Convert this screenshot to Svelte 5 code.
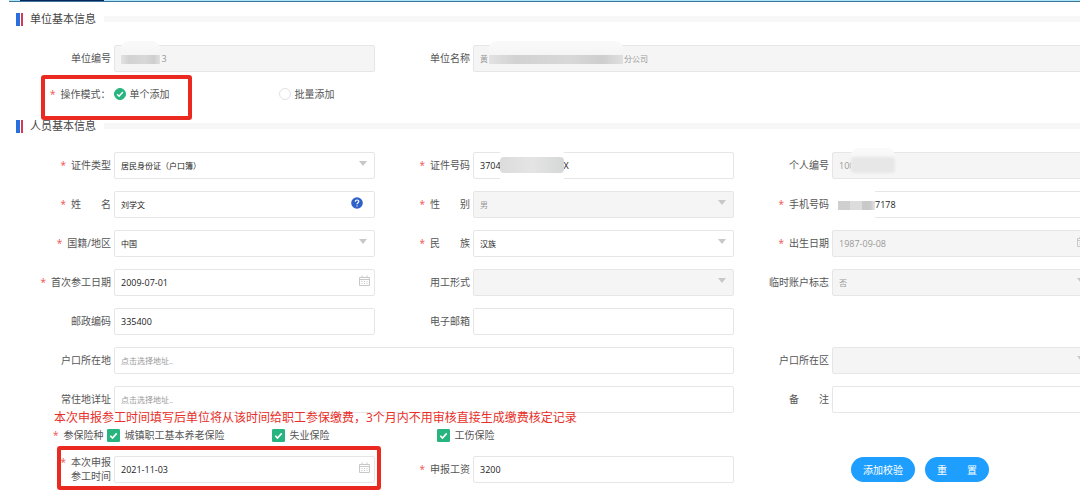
<script lang="ts">
	type Field = {
		id: string;
		label: string;
		kind?: 'text' | 'select' | 'date';
		value?: string;
		placeholder?: string;
		required?: boolean;
		disabled?: boolean;
		wide?: boolean;
		help?: boolean;
		numeric?: boolean;
		mask?: { left: number; width: number; tall?: boolean };
	};

	const EN = '\u2002';
	const EM = '\u3000';

	const unitFields: Field[] = [
		{
			id: 'unit-no',
			label: '单位编号',
			value: EN.repeat(9) + '3',
			disabled: true,
			numeric: true,
			mask: { left: 7, width: 39 }
		},
		{
			id: 'unit-name',
			label: '单位名称',
			value: '黄' + EM.repeat(17) + '分公司',
			disabled: true,
			wide: true,
			mask: { left: 16, width: 134 }
		}
	];

	const personFields: Field[] = [
		{ id: 'id-type', label: '证件类型', kind: 'select', value: '居民身份证（户口簿）', required: true },
		{
			id: 'id-no',
			label: '证件号码',
			value: '3704' + EM.repeat(7) + 'X',
			required: true,
			numeric: true,
			mask: { left: 27, width: 64, tall: true }
		},
		{
			id: 'person-no',
			label: '个人编号',
			value: '100',
			disabled: true,
			numeric: true,
			mask: { left: 19, width: 44, tall: true }
		},
		{ id: 'name', label: '姓　　名', value: '刘学文', required: true, help: true },
		{ id: 'sex', label: '性　　别', kind: 'select', value: '男', required: true, disabled: true },
		{
			id: 'phone',
			label: '手机号码',
			value: EN.repeat(8) + '7178',
			required: true,
			numeric: true,
			mask: { left: 0, width: 43 }
		},
		{ id: 'country', label: '国籍/地区', kind: 'select', value: '中国', required: true },
		{ id: 'nation', label: '民　　族', kind: 'select', value: '汉族', required: true },
		{ id: 'birthday', label: '出生日期', kind: 'date', value: '1987-09-08', required: true, disabled: true, numeric: true },
		{ id: 'first-work', label: '首次参工日期', kind: 'date', value: '2009-07-01', required: true, numeric: true },
		{ id: 'work-form', label: '用工形式', kind: 'select', value: '', disabled: true },
		{ id: 'temp-flag', label: '临时账户标志', kind: 'select', value: '否', disabled: true },
		{ id: 'postcode', label: '邮政编码', value: '335400', numeric: true },
		{ id: 'email', label: '电子邮箱', value: '' },
		{ id: 'hukou', label: '户口所在地', placeholder: '点击选择地址..', wide: true },
		{ id: 'hukou-area', label: '户口所在区', kind: 'select', value: '', disabled: true },
		{ id: 'address', label: '常住地详址', placeholder: '点击选择地址..', wide: true },
		{ id: 'remark', label: '备　　注', value: '' }
	];

	const startDate: Field = {
		id: 'start-date',
		label: '本次申报\n参工时间',
		kind: 'date',
		value: '2021-11-03',
		required: true,
		numeric: true
	};
	const salary: Field = { id: 'salary', label: '申报工资', value: '3200', required: true, numeric: true };

	let mode = $state('single');
	let insurances = $state([
		{ name: '城镇职工基本养老保险', checked: true },
		{ name: '失业保险', checked: true },
		{ name: '工伤保险', checked: true }
	]);
</script>

{#snippet formItem(f: Field)}
	<div class="item" class:wide={f.wide}>
		<label for={f.id}>
			{#if f.required}<span class="star">*</span>{/if}
			<span class="label-text">{f.label}</span>
		</label>
		<div class="control">
			{#if f.kind === 'select'}
				<select id={f.id} disabled={f.disabled}>
					<option>{f.value}</option>
				</select>
				<span class="arrow"></span>
			{:else}
				<input
					id={f.id}
					type="text"
					class:numeric={f.numeric}
					value={f.value ?? ''}
					placeholder={f.placeholder}
					disabled={f.disabled}
				/>
			{/if}
			{#if f.kind === 'date'}
				<svg class="calendar" viewBox="0 0 11 11" aria-hidden="true">
					<path d="M.5 2.5h10v8H.5zM.5 4.5h10M3 .5v2.5M8 .5v2.5" />
					<path d="M2.5 6.5h1M5 6.5h1M7.5 6.5h1M2.5 8.5h1M5 8.5h1M7.5 8.5h1" />
				</svg>
			{/if}
			{#if f.help}
				<svg class="help" viewBox="0 0 12 12" aria-hidden="true">
					<circle cx="6" cy="6" r="5.8" />
					<path d="M4.3 4.7c0-2.3 3.5-2.2 3.5-.2C7.800 5.700 6 5.800 6 7.200M6 8.400v1" />
				</svg>
			{/if}
			{#if f.mask}
				<span
					class="mask"
					class:tall={f.mask.tall}
					class:grey={f.disabled}
					style="left: {f.mask.left}px; width: {f.mask.width}px"
				></span>
			{/if}
		</div>
	</div>
{/snippet}

<div class="topbar"><span></span></div>

<form class="page" onsubmit={(e) => e.preventDefault()}>
	<h2>单位基本信息</h2>
	<div class="grid">
		{#each unitFields as f (f.id)}
			{@render formItem(f)}
		{/each}
	</div>

	<div class="mode" role="radiogroup" aria-labelledby="mode-title">
		<span class="star">*</span>
		<span class="mode-title" id="mode-title">操作模式：</span>
		<label class="choice">
			<input type="radio" name="mode" value="single" bind:group={mode} />
			单个添加
		</label>
		<label class="choice">
			<input type="radio" name="mode" value="batch" bind:group={mode} />
			批量添加
		</label>
		<span class="frame"></span>
	</div>

	<h2>人员基本信息</h2>
	<div class="grid">
		{#each personFields as f (f.id)}
			{@render formItem(f)}
		{/each}
	</div>

	<p class="notice">本次申报参工时间填写后单位将从该时间给职工参保缴费，3个月内不用审核直接生成缴费核定记录</p>

	<div class="insurance" role="group" aria-labelledby="insurance-title">
		<span class="star">*</span>
		<span class="insurance-title" id="insurance-title">参保险种</span>
		{#each insurances as item}
			<label class="choice">
				<input type="checkbox" bind:checked={item.checked} />
				{item.name}
			</label>
		{/each}
	</div>

	<div class="grid">
		<div class="framed">
			{@render formItem(startDate)}
			<span class="frame"></span>
		</div>
		{@render formItem(salary)}
		<div class="buttons">
			<button type="submit">添加校验</button>
			<button type="reset">重　　置</button>
		</div>
	</div>
</form>

<style>
	:global(body) {
		overflow-x: hidden;
		background: #fff;
	}

	.topbar {
		height: 1px;
		margin-left: 9px;
		padding-left: 11px;
		border-bottom: 1px solid #41759c;
		background: #a9e6f7;
	}

	.topbar span {
		display: block;
		width: 84px;
		height: 1px;
		background: #06255a;
	}

	.page {
		padding: 10px 0 16px 16px;
		color: #555;
		font-family: 'Open Sans', 'Noto Sans CJK SC', sans-serif;
		font-size: 10px;
		line-height: 14px;
	}

	h2 {
		display: flex;
		align-items: center;
		margin: 0 0 19px;
		color: #444;
		font-size: 11px;
		font-weight: 400;
		line-height: 14px;
	}

	h2::before {
		content: '';
		width: 7px;
		height: 13px;
		margin-right: 7px;
		background: linear-gradient(90deg, #2a70dd 4px, #fff 4px 5px, #d2395a 5px);
	}

	h2::after {
		content: '';
		flex: 1;
		height: 6px;
		margin-left: 8px;
		background: #f7f7f7;
	}

	/* the last column runs under the edge of the window */
	.grid {
		display: grid;
		grid-template-columns: repeat(3, 1fr);
		row-gap: 12px;
		margin-right: -13px;
	}

	.item {
		display: flex;
		align-items: center;
		height: 27px;
	}

	.wide {
		grid-column: span 2;
	}

	.item label {
		display: flex;
		justify-content: flex-end;
		flex: 0 0 95px;
		margin-right: 3px;
		padding-bottom: 2px;
	}

	.label-text {
		white-space: pre;
	}

	.star {
		margin-right: 5px;
		color: #f0524f;
	}

	.control {
		position: relative;
		flex: 1;
		height: 27px;
	}

	.control input,
	.control select {
		display: block;
		box-sizing: border-box;
		width: 100%;
		height: 27px;
		margin: 0;
		padding: 0 6px;
		border: 1px solid #e6e6e6;
		border-radius: 2px;
		background: #fff;
		color: #222;
		font-family: inherit;
		font-size: 8px;
		appearance: none;
	}

	.control input.numeric {
		font-size: 9px;
	}

	.control input:disabled,
	.control select:disabled {
		background: #f5f5f5;
		color: #999;
		opacity: 1;
	}

	.control input::placeholder {
		color: #999;
		opacity: 1;
	}

	.arrow {
		position: absolute;
		top: 9px;
		right: 8px;
		border: 4px solid transparent;
		border-top: 5px solid #c8c8c8;
		border-bottom: 0;
		pointer-events: none;
	}

	.calendar {
		position: absolute;
		top: 6px;
		right: 5px;
		width: 11px;
		height: 11px;
		fill: none;
		stroke: #c8c8c8;
	}

	.help {
		position: absolute;
		top: 6px;
		right: 12px;
		width: 12px;
		height: 12px;
		fill: #2f62c8;
	}

	.help path {
		fill: none;
		stroke: #fff;
		stroke-width: 1.2;
	}

	/* smudge that hides private digits, it also wipes the border around them */
	.mask {
		position: absolute;
		top: 0;
		height: 27px;
	}

	.mask::before,
	.mask::after {
		content: '';
		position: absolute;
	}

	.mask::before {
		inset: -2px 0;
		background: #fff;
	}

	.mask.grey::before {
		inset: -4px 0 4px;
		border-radius: 8px 8px 0 0;
		background: linear-gradient(#fafafa, #f5f5f5 50%);
	}

	.mask::after {
		inset: 10px 0 8px 6px;
		background: linear-gradient(90deg, #cfcfcf 12px, #dcdcdc 12px 24px, #c9c9c9 24px 32px, #e2e2e2);
	}

	.mask.grey::after {
		inset: 10px 0 8px;
		background: linear-gradient(90deg, #e2e2e2, #d2d2d2 20%, #d8d8d8 60%, #cecece 85%, #e0e0e0);
	}

	.mask.tall::after {
		inset: 5px 0 6px;
		border-radius: 4px;
		background: linear-gradient(90deg, #dcdcdc, #e4e4e4 50%, #d5d8d6);
	}

	.mask.tall.grey::after {
		background: #e7e7e7;
		filter: blur(1px);
	}

	.mode,
	.insurance {
		display: flex;
		align-items: center;
		height: 14px;
	}

	.mode {
		position: relative;
		margin: 15px 0 18px;
		padding-left: 34px;
	}

	.mode-title {
		width: 53px;
	}

	.choice {
		display: flex;
		align-items: center;
		white-space: nowrap;
	}

	.choice input {
		box-sizing: border-box;
		flex: none;
		margin: 0;
		border: 1px solid #e2e2e2;
		background: #fff center / 100% no-repeat;
		appearance: none;
	}

	.mode .choice {
		width: 165px;
	}

	.mode .choice input {
		width: 12px;
		height: 12px;
		margin-right: 4px;
		border-radius: 50%;
	}

	.choice input:checked {
		border-color: #27b47e;
		background-color: #27b47e;
		background-image: url("data:image/svg+xml,%3Csvg xmlns='http://www.w3.org/2000/svg' viewBox='0 0 12 12'%3E%3Cpath d='M2.500 6.300l2.400 2.400 4.600-5' fill='none' stroke='%23fff' stroke-width='1.800'/%3E%3C/svg%3E");
	}

	.frame {
		position: absolute;
		z-index: 1;
		box-sizing: border-box;
		border: 4px solid #ea2a20;
		border-radius: 3px;
		pointer-events: none;
	}

	.mode .frame {
		top: -12px;
		left: 25px;
		width: 151px;
		height: 45px;
	}

	.notice {
		position: relative;
		margin: 0 0 5px 38px;
		color: #e8302a;
		font-size: 12px;
		line-height: 10px;
		white-space: nowrap;
	}

	.insurance {
		margin-bottom: 14px;
		padding-left: 37px;
	}

	.insurance-title {
		width: 43px;
	}

	.insurance .choice {
		width: 165px;
	}

	.insurance .choice input {
		width: 13px;
		height: 13px;
		margin-right: 5px;
		border-radius: 1px;
	}

	.framed {
		position: relative;
	}

	.framed .frame {
		inset: -10px -6px -7px 41px;
	}

	.buttons {
		display: flex;
		align-items: center;
		gap: 10px;
		padding-left: 117px;
	}

	button {
		width: 64px;
		height: 25px;
		padding: 0;
		border: 0;
		border-radius: 13px;
		background: #1e9fff;
		color: #fff;
		font-family: inherit;
		font-size: 10px;
	}
</style>
